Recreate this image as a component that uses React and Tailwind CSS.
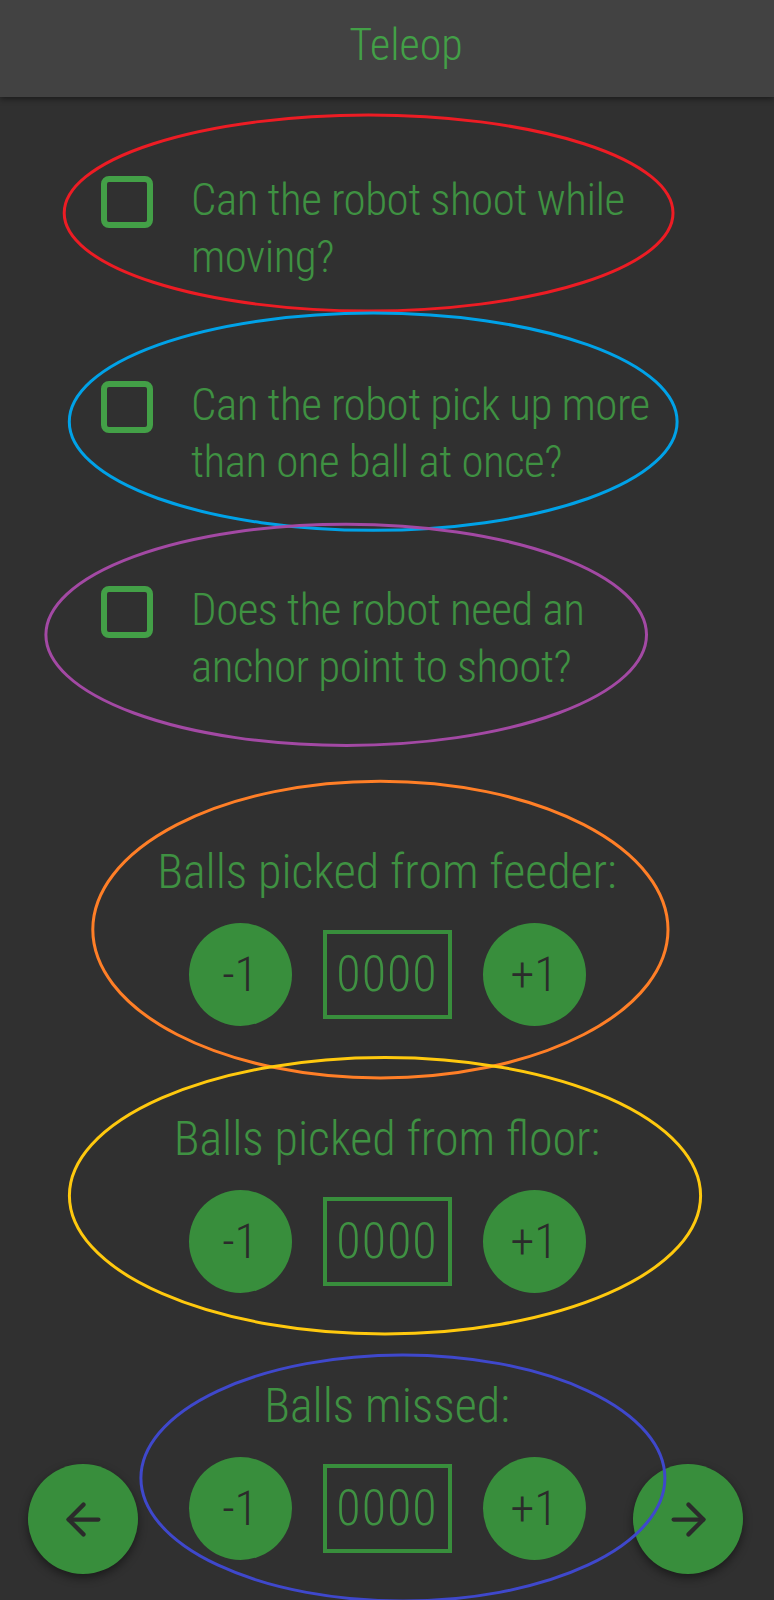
import React, { useState } from 'react';
import { ArrowLeft, ArrowRight } from 'lucide-react';

const questions = [
    ['Can the robot shoot while', 'moving?'],
    ['Can the robot pick up more', 'than one ball at once?'],
    ['Does the robot need an', 'anchor point to shoot?'],
];

const counters = ['Balls picked from feeder:', 'Balls picked from floor:', 'Balls missed:'];

// paint-style annotation rings drawn over the screenshot
const rings = [
    { cx: 368.6, cy: 213, rx: 304.4, ry: 98, color: '#ed1c24' },
    { cx: 373.2, cy: 421.7, rx: 303.9, ry: 108.6, color: '#00a2e8' },
    { cx: 346.2, cy: 634.8, rx: 300.3, ry: 110.6, color: '#a349a4' },
    { cx: 380.4, cy: 929.6, rx: 287.6, ry: 148.4, color: '#ff7f27' },
    { cx: 385, cy: 1195.7, rx: 315.6, ry: 138.2, color: '#ffc90e' },
    { cx: 402.9, cy: 1478, rx: 262, ry: 123, color: '#3f48cc' },
];

const Counter = ({ label }) => {
    const [value, setValue] = useState(0);

    return (
        <div className="flex flex-col items-center">
            <p className="text-[48px] leading-[57px] whitespace-nowrap text-[#3f9142]">{label}</p>
            <div className="mt-[23px] flex items-center justify-center gap-[31px]">
                <button
                    className="w-[103px] h-[103px] rounded-full bg-[#388e3c] text-[48px] text-[#2b2b2b] flex items-center justify-center"
                    onClick={() => setValue(v => Math.max(0, v - 1))}
                >
                    -1
                </button>
                <div className="w-[129px] h-[89px] border-4 border-[#388e3c] flex items-center justify-center text-[50px] tracking-[1px] text-[#3f9142]">
                    {String(value).padStart(4, '0')}
                </div>
                <button
                    className="w-[103px] h-[103px] rounded-full bg-[#388e3c] text-[48px] text-[#2b2b2b] flex items-center justify-center"
                    onClick={() => setValue(v => v + 1)}
                >
                    +1
                </button>
            </div>
        </div>
    );
};

const App = () => {
    const [checked, setChecked] = useState([false, false, false]);

    return (
        <div
            className="relative h-[1600px] overflow-hidden bg-[#303030] font-light"
            style={{ fontFamily: 'Roboto, "Noto Sans", sans-serif', fontStretch: '75%' }}
        >
            <header className="h-[97px] pl-[38px] bg-[#424242] shadow-[0_2px_6px_rgba(0,0,0,0.45)] flex items-center justify-center relative z-10">
                <h1 className="text-[44px] text-[#43a047] pb-[8px]">Teleop</h1>
            </header>

            <div className="pt-[74px] pl-[101px] flex flex-col gap-[91px]">
                {questions.map((lines, i) => (
                    <label key={lines[0]} className="flex items-start gap-[38px] cursor-pointer">
                        <span
                            className="mt-[5px] w-[52px] h-[52px] shrink-0 rounded-[8px] border-[6px] border-[#43a047]"
                            onClick={() => setChecked(c => c.map((x, j) => (j === i ? !x : x)))}
                        ></span>
                        <span className="flex flex-col text-[45px] leading-[57px] tracking-[-0.5px] whitespace-nowrap text-[#3f9142]">
                            {lines.map(l => (
                                <span key={l}>{l}</span>
                            ))}
                        </span>
                    </label>
                ))}
            </div>

            <div className="mt-[148px] flex flex-col gap-[84px]">
                {counters.map(c => (
                    <Counter key={c} label={c} />
                ))}
            </div>

            <button className="absolute left-[28px] bottom-[26px] w-[110px] h-[110px] rounded-full bg-[#388e3c] shadow-[0_4px_10px_rgba(0,0,0,0.45)] flex items-center justify-center">
                <ArrowLeft size={51} color="#2b2b2b" strokeWidth={2} />
            </button>
            <button className="absolute right-[31px] bottom-[26px] w-[110px] h-[110px] rounded-full bg-[#388e3c] shadow-[0_4px_10px_rgba(0,0,0,0.45)] flex items-center justify-center">
                <ArrowRight size={51} color="#2b2b2b" strokeWidth={2} />
            </button>

            <svg className="absolute inset-0 pointer-events-none" width="774" height="1600" viewBox="0 0 774 1600">
                {rings.map(r => (
                    <ellipse key={r.color} cx={r.cx} cy={r.cy} rx={r.rx} ry={r.ry} fill="none" stroke={r.color} strokeWidth="3" />
                ))}
            </svg>
        </div>
    );
};

export default App;
